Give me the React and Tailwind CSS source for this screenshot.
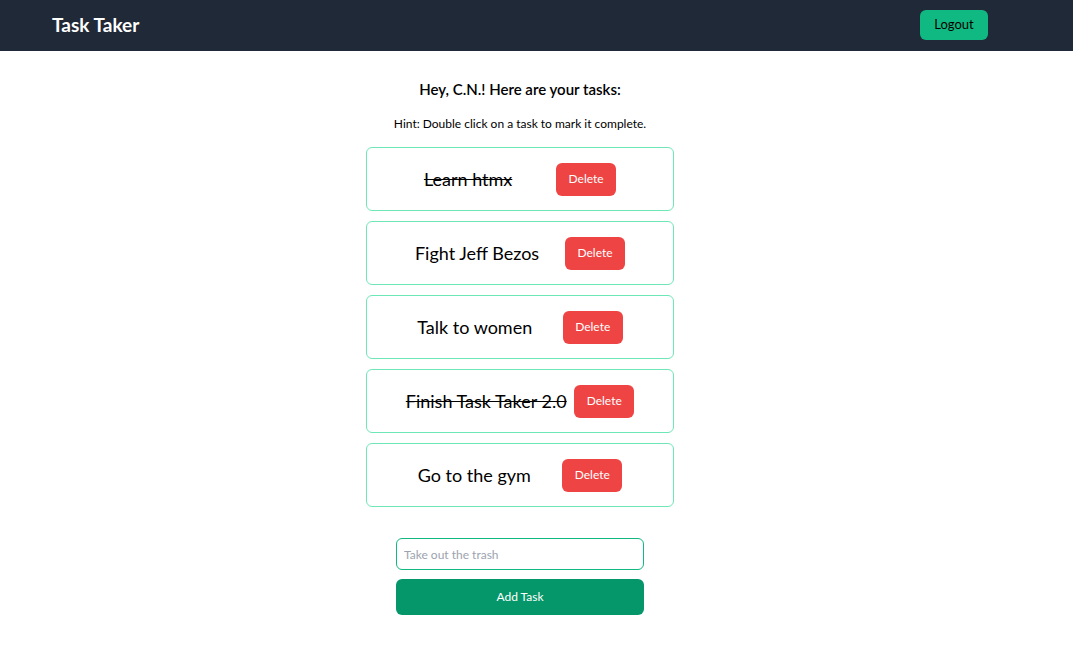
import React, { useState } from "react";

const initialTasks = [
  { id: 1, text: "Learn htmx", done: true },
  { id: 2, text: "Fight Jeff Bezos", done: false },
  { id: 3, text: "Talk to women", done: false },
  { id: 4, text: "Finish Task Taker 2.0", done: true },
  { id: 5, text: "Go to the gym", done: false },
];

export default function App() {
  const [tasks, setTasks] = useState(initialTasks);
  const [input, setInput] = useState("");

  const toggle = (id) =>
    setTasks((prev) => prev.map((t) => (t.id === id ? { ...t, done: !t.done } : t)));

  const remove = (id) => setTasks((prev) => prev.filter((t) => t.id !== id));

  const addTask = () => {
    if (!input.trim()) return;
    setTasks((prev) => [...prev, { id: Date.now(), text: input.trim(), done: false }]);
    setInput("");
  };

  return (
    <div className="min-h-screen bg-white text-black font-['Segoe_UI',Lato,sans-serif]">
      <nav className="h-[51px] bg-[#1f2937] flex items-center justify-between pl-[52px] pr-[85px]">
        <h1 className="text-white text-[19px] font-bold">Task Taker</h1>
        <button className="bg-[#10b981] text-black text-[13px] rounded-md h-[30px] w-[68px] -mt-[2px]">Logout</button>
      </nav>

      <main className="flex flex-col items-center pr-[33px]">
        <h2 className="mt-[26px] text-[15px] font-semibold leading-[24px]">Hey, C.N.! Here are your tasks:</h2>
        <p className="mt-[14px] text-[12px] leading-[18px]">Hint: Double click on a task to mark it complete.</p>

        <ul className="mt-[14px] flex flex-col gap-[10px]">
          {tasks.map((t) => (
            <li
              key={t.id}
              onDoubleClick={() => toggle(t.id)}
              className="w-[308px] h-[64px] border border-[#6ee7b7] rounded-md px-[35px] flex items-center justify-around select-none"
            >
              <span className={`text-[18px] leading-[28px] whitespace-nowrap ${t.done ? "line-through" : ""}`}>
                {t.text}
              </span>
              <button
                onClick={() => remove(t.id)}
                className="bg-[#ef4444] text-white text-[12px] rounded-md h-[33px] w-[60px]"
              >
                Delete
              </button>
            </li>
          ))}
        </ul>

        <div className="mt-[31px] flex flex-col gap-[9px] w-[248px]">
          <input
            type="text"
            value={input}
            onChange={(e) => setInput(e.target.value)}
            placeholder="Take out the trash"
            className="h-[32px] border border-[#10b981] rounded-md px-[7px] text-[12px] placeholder-[#9ca3af] focus:outline-none"
          />
          <button onClick={addTask} className="h-[36px] bg-[#059669] text-white text-[12px] rounded-md">
            Add Task
          </button>
        </div>
      </main>
    </div>
  );
}
